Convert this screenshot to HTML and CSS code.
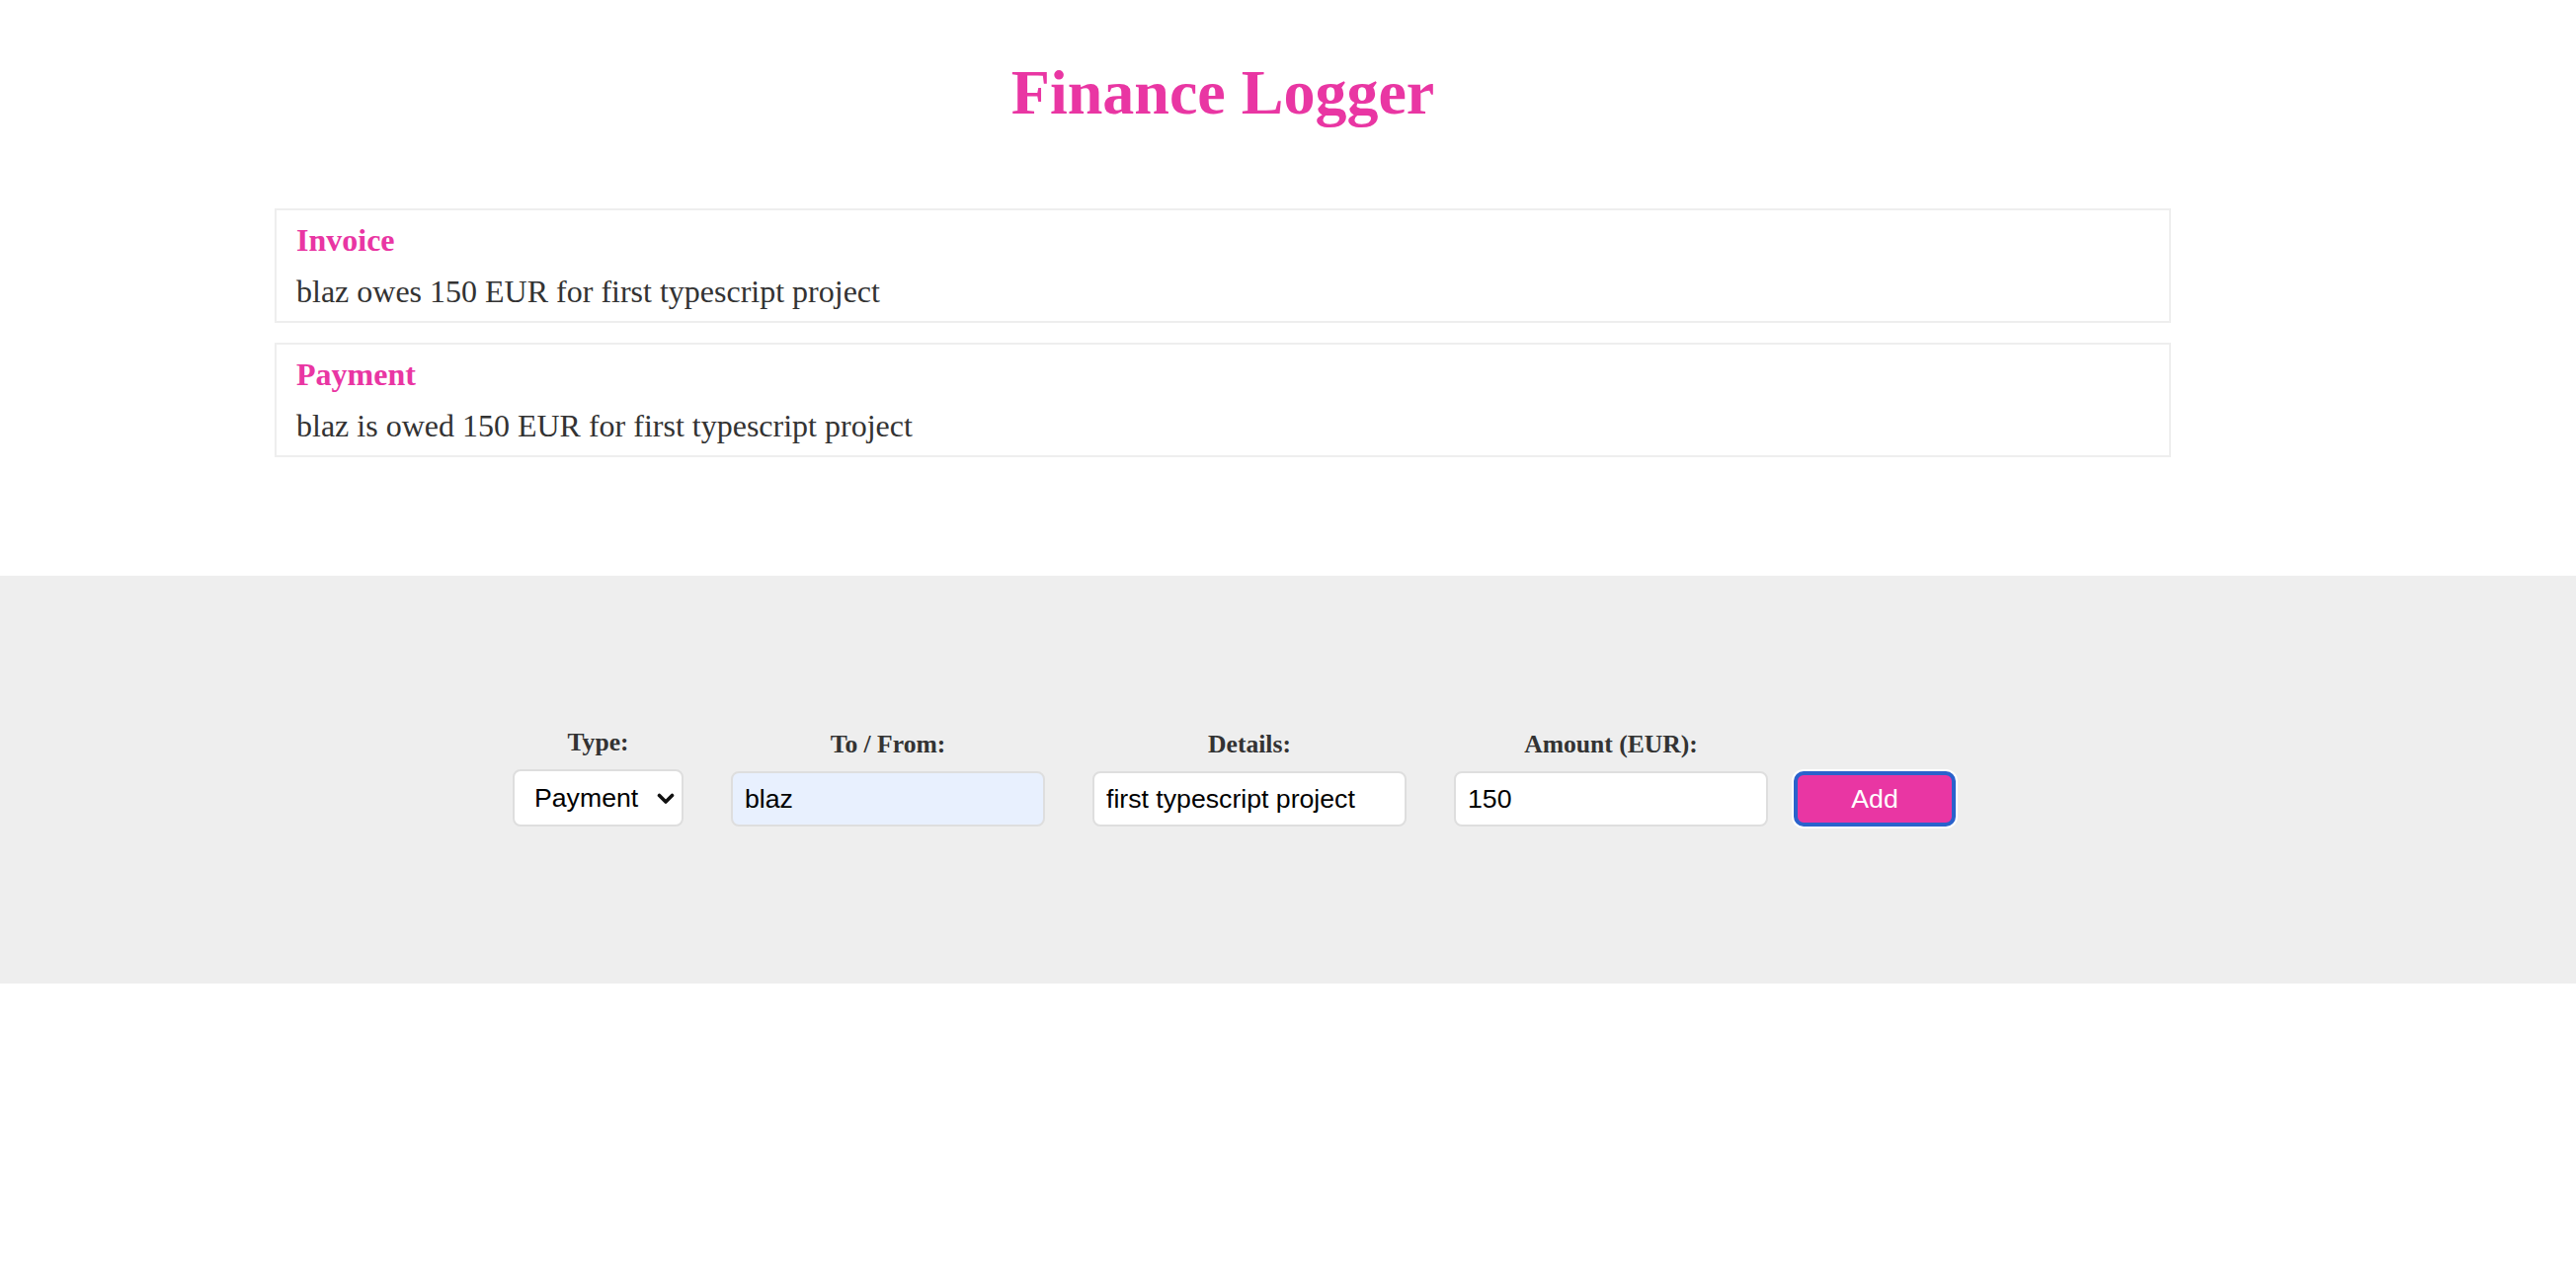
FILE: index.html
```html
<!DOCTYPE html>
<html lang="en">
<head>
<meta charset="utf-8">
<title>Finance Logger</title>
<link rel="stylesheet" href="styles.css">
</head>
<body>
<div class="wrapper">
  <h1 class="title">Finance Logger</h1>
  <ul class="items">
    <li class="item">
      <h4 class="item-type">Invoice</h4>
      <p class="item-text">blaz owes 150 EUR for first typescript project</p>
    </li>
    <li class="item">
      <h4 class="item-type">Payment</h4>
      <p class="item-text">blaz is owed 150 EUR for first typescript project</p>
    </li>
  </ul>
</div>
<footer class="footer">
  <form class="form">
    <div class="field">
      <label class="label" for="type">Type:</label>
      <div class="select-wrap">
        <select class="select" id="type">
          <option>Invoice</option>
          <option selected>Payment</option>
        </select>
        <svg class="chevron" width="18" height="12" viewBox="0 0 18 12" aria-hidden="true"><polyline points="2.5,2.5 9,9 15.5,2.5" fill="none" stroke="#111" stroke-width="3.6" stroke-linecap="round" stroke-linejoin="round"/></svg>
      </div>
    </div>
    <div class="field">
      <label class="label" for="tofrom">To / From:</label>
      <input class="input input-autofill" id="tofrom" type="text" value="blaz">
    </div>
    <div class="field">
      <label class="label" for="details">Details:</label>
      <input class="input" id="details" type="text" value="first typescript project">
    </div>
    <div class="field">
      <label class="label" for="amount">Amount (EUR):</label>
      <input class="input" id="amount" type="text" value="150">
    </div>
    <button class="button" type="button">Add</button>
  </form>
</footer>
</body>
</html>
```
FILE: styles.css
```css
html, body {
  margin: 0;
  padding: 0;
  background: #fff;
}

body {
  font-family: "Liberation Serif", "Times New Roman", serif;
  color: #333;
}

.wrapper {
  width: 1920px;
  margin-left: 278px;
}

.title {
  margin: 57px 0 80px;
  font-size: 64px;
  line-height: 74px;
  font-weight: bold;
  color: #e936a3;
  text-align: center;
}

.items {
  list-style: none;
  margin: 0;
  padding: 0;
}

.item {
  box-sizing: border-box;
  border: 2px solid #eee;
  padding: 12px 20px 11px;
  margin-bottom: 20px;
}

.item:last-child {
  margin-bottom: 0;
}

.item-type {
  margin: 0;
  font-size: 32px;
  line-height: 37px;
  font-weight: bold;
  color: #e936a3;
}

.item-text {
  margin: 15px 0 0;
  font-size: 32px;
  line-height: 37px;
  color: #333;
}

.footer {
  margin-top: 120px;
  background: #eee;
  padding: 154px 0 159px;
}

.form {
  width: 1920px;
  margin-left: 278px;
  padding-left: 23px;
  box-sizing: border-box;
  display: flex;
  justify-content: center;
  align-items: flex-end;
  gap: 48px;
}

.field {
  display: flex;
  flex-direction: column;
  align-items: center;
}

.label {
  display: block;
  font-size: 25.6px;
  line-height: 30px;
  font-weight: bold;
  color: #333;
  margin-bottom: 12px;
}

.select-wrap {
  position: relative;
  width: 173px;
  height: 58px;
}

.select {
  -webkit-appearance: none;
  appearance: none;
  box-sizing: border-box;
  width: 173px;
  height: 58px;
  margin: 0;
  padding: 0 0 0 20px;
  border: 2px solid #dedede;
  border-radius: 8px;
  background: #fff;
  font-family: "Liberation Sans", Arial, sans-serif;
  font-size: 26.67px;
  color: #000;
}

.chevron {
  position: absolute;
  right: 9px;
  top: 24px;
  pointer-events: none;
}

.input {
  box-sizing: border-box;
  width: 318px;
  height: 56px;
  margin: 0;
  padding: 0 12px;
  border: 2px solid #dedede;
  border-radius: 8px;
  background: #fff;
  font-family: "Liberation Sans", Arial, sans-serif;
  font-size: 26.67px;
  color: #000;
  outline: none;
}

.input-autofill {
  background: #e8f0fe;
}

.button {
  box-sizing: border-box;
  width: 164px;
  height: 56px;
  margin: 0 0 0 -22px;
  padding: 0;
  border: 4px solid #2a62cc;
  border-radius: 10px;
  box-shadow: 0 0 0 2px #fff;
  background: #e936a3;
  color: #fff;
  font-family: "Liberation Sans", Arial, sans-serif;
  font-size: 26.67px;
  cursor: pointer;
}
```
